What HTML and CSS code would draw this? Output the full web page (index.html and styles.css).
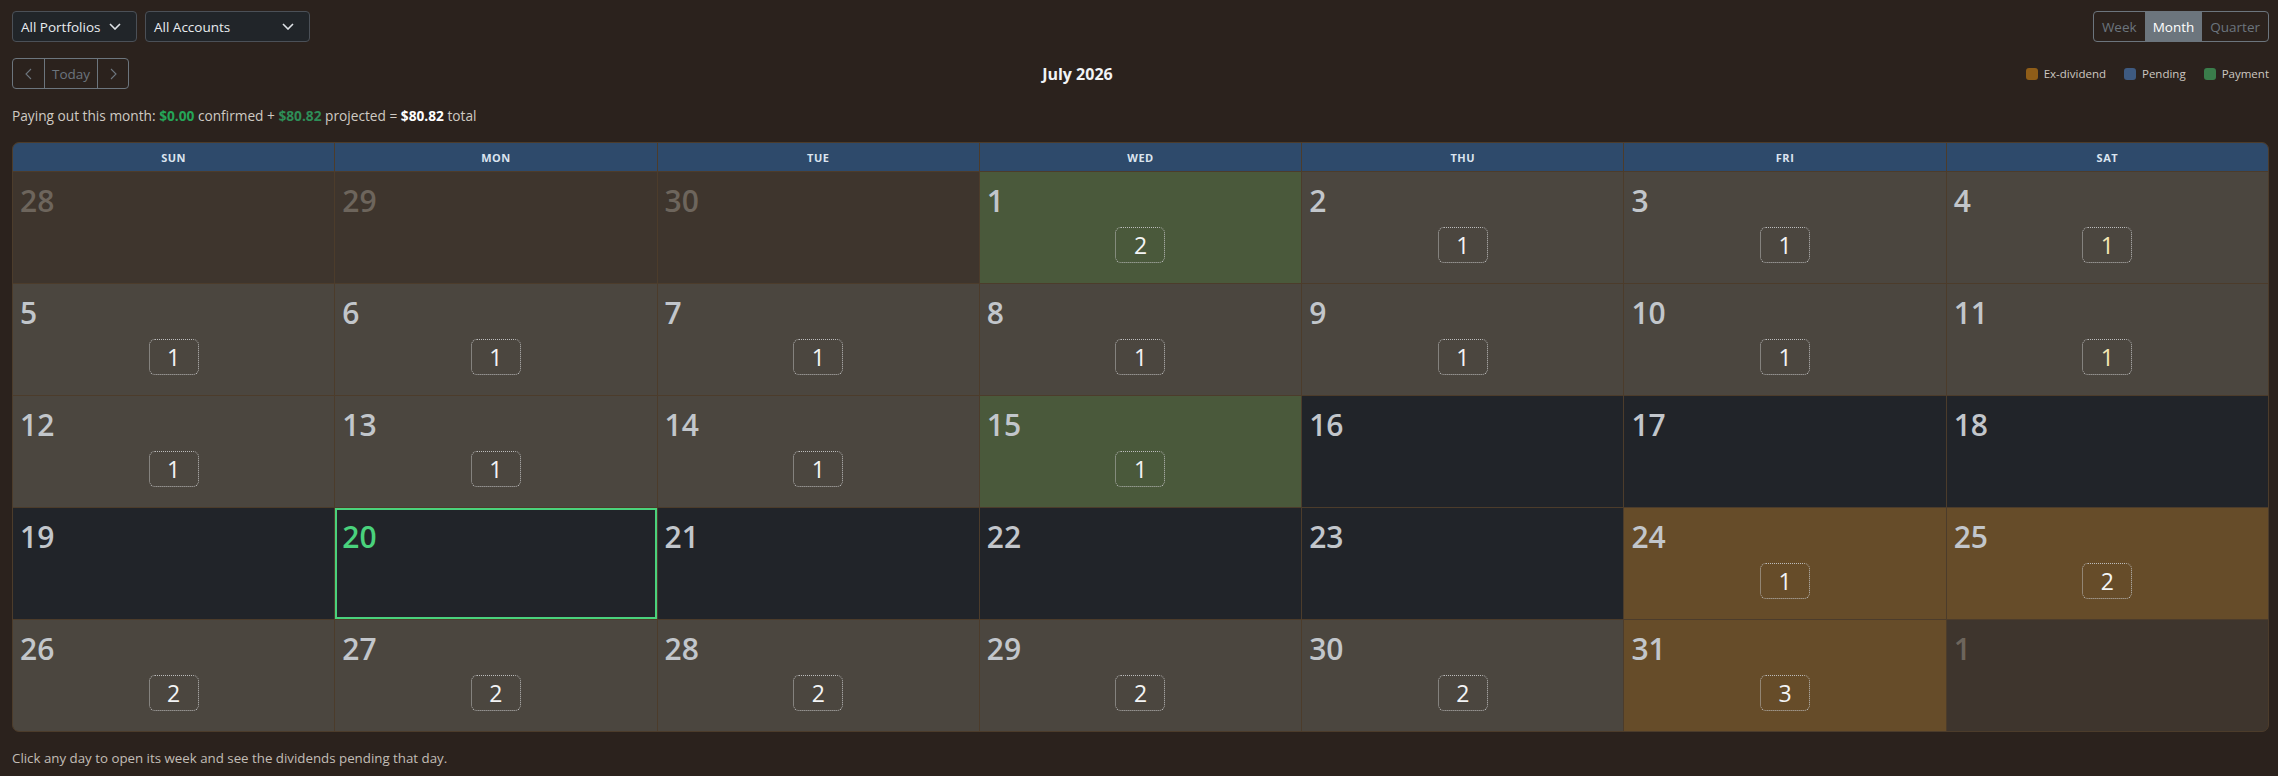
FILE: index.html
```html
<!DOCTYPE html>
<html lang="en">
<head>
  <meta charset="UTF-8" />
  <meta name="viewport" content="width=device-width, initial-scale=1.0"/>
  <title>Dividend Calendar</title>
  <link rel="stylesheet" href="styles.css">
</head>
<body>
  <div class="page">
    <div class="toolbar">
      <div class="filters">
        <div class="select select-portfolio">
          <span>All Portfolios</span>
          <svg class="caret" viewBox="0 0 12 7" width="12" height="7"><path d="M1 1l5 5 5-5" /></svg>
        </div>
        <div class="select select-account">
          <span>All Accounts</span>
          <svg class="caret" viewBox="0 0 12 7" width="12" height="7"><path d="M1 1l5 5 5-5" /></svg>
        </div>
      </div>
      <div class="btn-group view-toggle">
        <button class="btn">Week</button>
        <button class="btn active">Month</button>
        <button class="btn">Quarter</button>
      </div>
    </div>

    <div class="navbar">
      <div class="btn-group">
        <button class="btn btn-icon">
          <svg viewBox="0 0 7 12" width="7" height="12"><path d="M6 1L1 6l5 5" /></svg>
        </button>
        <button class="btn btn-today">Today</button>
        <button class="btn btn-icon">
          <svg viewBox="0 0 7 12" width="7" height="12"><path d="M1 1l5 5-5 5" /></svg>
        </button>
      </div>
      <h2 class="month-title">July 2026</h2>
      <div class="legend">
        <span class="legend-item"><i class="swatch swatch-ex"></i>Ex-dividend</span>
        <span class="legend-item"><i class="swatch swatch-pending"></i>Pending</span>
        <span class="legend-item"><i class="swatch swatch-payment"></i>Payment</span>
      </div>
    </div>

    <p class="summary">
      Paying out this month: <strong class="amt-confirmed">$0.00</strong> confirmed +
      <strong class="amt-projected">$80.82</strong> projected = <strong class="amt-total">$80.82</strong> total
    </p>

    <div class="calendar">
      <div class="dow">SUN</div>
      <div class="dow">MON</div>
      <div class="dow">TUE</div>
      <div class="dow">WED</div>
      <div class="dow">THU</div>
      <div class="dow">FRI</div>
      <div class="dow">SAT</div>

      <!-- week 1 -->
      <div class="day other"><span class="num">28</span></div>
      <div class="day other"><span class="num">29</span></div>
      <div class="day other"><span class="num">30</span></div>
      <div class="day pay"><span class="num">1</span><span class="count">2</span></div>
      <div class="day past"><span class="num">2</span><span class="count">1</span></div>
      <div class="day past"><span class="num">3</span><span class="count">1</span></div>
      <div class="day past"><span class="num">4</span><span class="count warm">1</span></div>

      <!-- week 2 -->
      <div class="day past"><span class="num">5</span><span class="count">1</span></div>
      <div class="day past"><span class="num">6</span><span class="count">1</span></div>
      <div class="day past"><span class="num">7</span><span class="count">1</span></div>
      <div class="day past"><span class="num">8</span><span class="count">1</span></div>
      <div class="day past"><span class="num">9</span><span class="count">1</span></div>
      <div class="day past"><span class="num">10</span><span class="count">1</span></div>
      <div class="day past"><span class="num">11</span><span class="count warm">1</span></div>

      <!-- week 3 -->
      <div class="day past"><span class="num">12</span><span class="count">1</span></div>
      <div class="day past"><span class="num">13</span><span class="count">1</span></div>
      <div class="day past"><span class="num">14</span><span class="count">1</span></div>
      <div class="day pay"><span class="num">15</span><span class="count">1</span></div>
      <div class="day"><span class="num">16</span></div>
      <div class="day"><span class="num">17</span></div>
      <div class="day"><span class="num">18</span></div>

      <!-- week 4 -->
      <div class="day"><span class="num">19</span></div>
      <div class="day today"><span class="num">20</span></div>
      <div class="day"><span class="num">21</span></div>
      <div class="day"><span class="num">22</span></div>
      <div class="day"><span class="num">23</span></div>
      <div class="day exdiv"><span class="num">24</span><span class="count">1</span></div>
      <div class="day exdiv"><span class="num">25</span><span class="count">2</span></div>

      <!-- week 5 -->
      <div class="day past"><span class="num">26</span><span class="count">2</span></div>
      <div class="day past"><span class="num">27</span><span class="count">2</span></div>
      <div class="day past"><span class="num">28</span><span class="count">2</span></div>
      <div class="day past"><span class="num">29</span><span class="count">2</span></div>
      <div class="day past"><span class="num">30</span><span class="count">2</span></div>
      <div class="day exdiv"><span class="num">31</span><span class="count">3</span></div>
      <div class="day other"><span class="num">1</span></div>
    </div>

    <p class="hint">Click any day to open its week and see the dividends pending that day.</p>
  </div>
</body>
</html>
```

FILE: styles.css
```css
html, body {
  margin: 0;
  padding: 0;
  background-color: #2b221d;
  font-family: "Open Sans", "Noto Sans", sans-serif;
  color: #cfcac3;
}

.page {
  padding: 11px 9px 0 12px;
}

/* top row: filters + view switch */
.toolbar {
  display: flex;
  justify-content: space-between;
  align-items: center;
}

.filters {
  display: flex;
  gap: 8px;
}

.select {
  box-sizing: border-box;
  height: 31px;
  display: flex;
  align-items: center;
  justify-content: space-between;
  padding: 0 15px 0 8px;
  background: #212529;
  border: 1px solid #4b5057;
  border-radius: 4px;
  color: #e9ecef;
  font-size: 13.5px;
}

.select-portfolio { width: 125px; }
.select-account { width: 165px; }

.caret path {
  fill: none;
  stroke: #dee2e6;
  stroke-width: 1.6;
}

/* bootstrap-ish small outline buttons */
.btn-group {
  display: flex;
  border: 1px solid #6c757d;
  border-radius: 4px;
  overflow: hidden;
}

.btn {
  height: 29px;
  padding: 0 8px;
  background: transparent;
  border: 0;
  color: #6c757d;
  font-family: inherit;
  font-size: 13.5px;
  display: flex;
  align-items: center;
  justify-content: center;
}

.btn + .btn {
  border-left: 1px solid #6c757d;
}

.view-toggle .btn {
  padding: 0 8px;
}

.view-toggle .btn + .btn {
  border-left: 0;
}

.btn.active {
  background: #6c757d;
  color: #fff;
}

.btn-today {
  padding: 0 7px;
}

.btn-icon {
  width: 31px;
  padding: 0;
}

.btn-icon path {
  fill: none;
  stroke: #6c757d;
  stroke-width: 1.1;
}

/* second row: nav, title, legend */
.navbar {
  display: flex;
  justify-content: space-between;
  align-items: center;
  margin-top: 16px;
}

.month-title {
  margin: 0;
  font-size: 16px;
  font-weight: 700;
  color: #f1f3f5;
}

.legend {
  display: flex;
  gap: 18px;
  font-size: 11.5px;
  color: #cdc8c1;
}

.legend-item {
  display: flex;
  align-items: center;
  gap: 6px;
}

.swatch {
  width: 12px;
  height: 12px;
  border-radius: 3px;
}

.swatch-ex { background: #8f5d18; }
.swatch-pending { background: #3e5a80; }
.swatch-payment { background: #3a7d4b; }

.summary {
  margin: 16px 0 16px;
  font-size: 13.7px;
  line-height: 21px;
}

.amt-confirmed { color: #25a558; }
.amt-projected { color: #2e8d57; }
.amt-total { color: #fff; }

/* month grid */
.calendar {
  display: grid;
  grid-template-columns: repeat(7, 1fr);
  grid-template-rows: 28px repeat(5, 111px);
  gap: 1px;
  background: #4c3c2b;
  border: 1px solid #4c3c2b;
  border-radius: 7px;
  overflow: hidden;
}

.dow {
  background: #2e4a6b;
  color: #dbe4ef;
  font-size: 11px;
  font-weight: 700;
  letter-spacing: 0.5px;
  display: flex;
  align-items: center;
  justify-content: center;
}

.day {
  position: relative;
  display: flex;
  flex-direction: column;
  align-items: center;
  padding: 11px 7px 0;
  background: #212429;
}

.day .num {
  align-self: flex-start;
  font-size: 30px;
  font-weight: 600;
  line-height: 36px;
  color: #c2c6cb;
}

.day.past { background: #4b463f; }
.day.pay { background: #4a593b; }
.day.exdiv { background: #664c29; }
.day.other { background: #3e352d; }
.day.other .num { color: #6d655c; }

.day.today {
  box-shadow: inset 0 0 0 2px #4ad27c;
}

.day.today .num { color: #4ad27c; }

.count {
  box-sizing: border-box;
  margin-top: 8px;
  width: 50px;
  height: 36px;
  display: flex;
  align-items: center;
  justify-content: center;
  border: 1px dotted #bdbdbd;
  border-radius: 6px;
  color: #f3f4f5;
  font-size: 23px;
}

.count.warm { color: #f5e7b5; }

.hint {
  margin: 16px 0 0;
  font-size: 13.3px;
  line-height: 21px;
  color: #c2bdb6;
}
```
